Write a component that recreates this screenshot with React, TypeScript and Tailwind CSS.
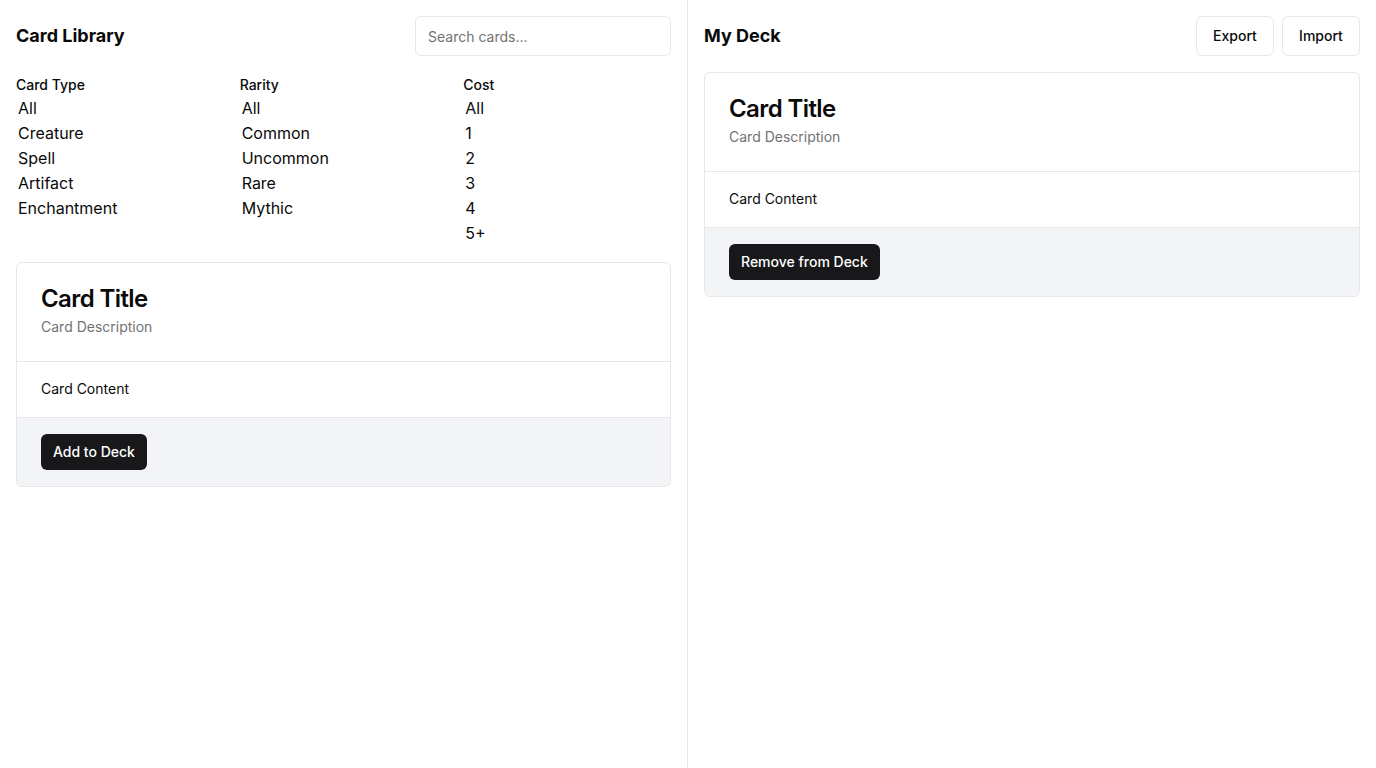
import React from "react";

const font = { fontFamily: "Inter, 'Noto Sans', sans-serif" };

function FilterCol({ label, options }: { label: string; options: string[] }) {
  return (
    <div className="flex flex-col">
      <div className="pt-px text-sm font-medium leading-[23px] text-[#0a0a0a]">{label}</div>
      <div className="flex flex-col">
        {options.map((o) => (
          <div key={o} className="h-[25px] pl-[2px] text-base leading-[25px] text-[#0a0a0a]">
            {o}
          </div>
        ))}
      </div>
    </div>
  );
}

function Card({ action }: { action: string }) {
  return (
    <div className="rounded-md border border-[#e5e7eb] bg-white overflow-hidden">
      <div className="flex flex-col gap-1.5 p-6 border-b border-[#e5e7eb]">
        <div className="text-2xl font-semibold leading-none tracking-tight text-[#0a0a0a]">Card Title</div>
        <div className="text-sm leading-5 text-[#737373]">Card Description</div>
      </div>
      <div className="px-6 pt-[17px] pb-[18px] text-sm leading-5 text-[#0a0a0a] border-b border-[#e5e7eb]">Card Content</div>
      <div className="bg-[#f3f4f6] px-6 py-4">
        <button className="h-9 rounded-md bg-[#18181b] px-3 text-sm font-medium text-white">{action}</button>
      </div>
    </div>
  );
}

export default function App() {
  return (
    <div className="flex h-screen w-full bg-white" style={font}>
      <div className="w-1/2 border-r border-[#e5e7eb] p-4 flex flex-col gap-4">
        <div className="flex items-center justify-between h-10">
          <h2 className="text-lg font-bold text-[#0a0a0a]">Card Library</h2>
          <input
            placeholder="Search cards..."
            className="h-10 w-[256px] rounded-md border border-[#e5e7eb] px-3 text-sm placeholder:text-[#737373] outline-none"
          />
        </div>
        <div className="grid grid-cols-3 gap-4">
          <FilterCol label="Card Type" options={["All", "Creature", "Spell", "Artifact", "Enchantment"]} />
          <FilterCol label="Rarity" options={["All", "Common", "Uncommon", "Rare", "Mythic"]} />
          <FilterCol label="Cost" options={["All", "1", "2", "3", "4", "5+"]} />
        </div>
        <Card action="Add to Deck" />
      </div>
      <div className="w-1/2 p-4 flex flex-col gap-4">
        <div className="flex items-center justify-between h-10">
          <h2 className="text-lg font-bold text-[#0a0a0a]">My Deck</h2>
          <div className="flex gap-2">
            <button className="h-10 w-[78px] rounded-md border border-[#e5e7eb] text-sm font-medium text-[#0a0a0a]">Export</button>
            <button className="h-10 w-[78px] rounded-md border border-[#e5e7eb] text-sm font-medium text-[#0a0a0a]">Import</button>
          </div>
        </div>
        <Card action="Remove from Deck" />
      </div>
    </div>
  );
}
